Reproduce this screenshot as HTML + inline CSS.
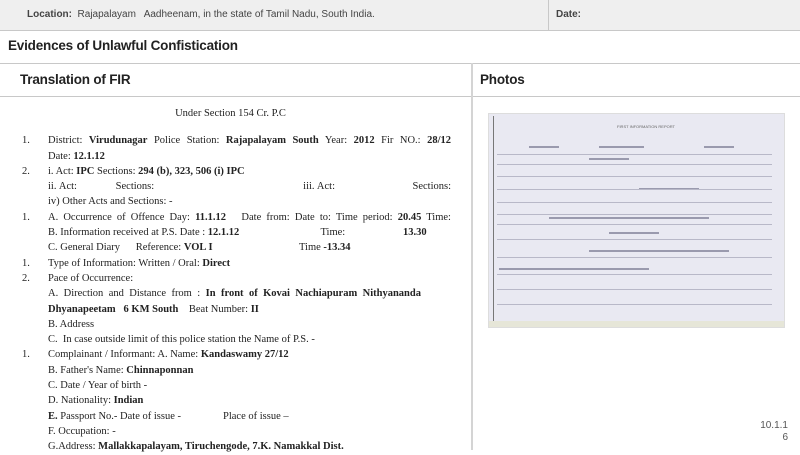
<!DOCTYPE html>
<html><head><style>
*{margin:0;padding:0;box-sizing:border-box}
body{width:800px;height:450px;overflow:hidden;background:#fff;font-family:"Liberation Sans",sans-serif;position:relative}
.top{position:absolute;left:0;top:0;width:800px;height:31px;background:#efefef;border-bottom:1px solid #c8c8c8}
.top .v{position:absolute;left:548px;top:0;width:1px;height:31px;background:#c8c8c8}
.t{position:absolute;font-size:10px;color:#444}
.h{position:absolute;font-size:13.5px;font-weight:bold;color:#222;letter-spacing:-0.2px}
.line{position:absolute;left:0;width:800px;height:1px;background:#c8c8c8}
.vl{position:absolute;left:471px;top:63px;width:2px;height:387px;background:#d4d4d4}
.doc{position:absolute;left:0;top:106px;width:471px;font-family:"Liberation Serif",serif;font-size:10.5px;color:#222;line-height:15.3px}
.r{position:relative;padding-left:48px;padding-right:20px;text-align:justify;text-align-last:justify;white-space:nowrap}
.r.n{text-align-last:left}
.r span.num{position:absolute;left:22px}
b{font-weight:bold}
.photo{position:absolute;left:488px;top:113px;width:297px;height:215px;background:#e9e9f2;border:1px solid #ddd}
.pl{position:absolute;left:8px;height:1px;background:#b8b8c8}
.sc{position:absolute;height:2px;background:#9a9aae}
</style></head><body>
<div class="top"><div class="v"></div></div>
<div class="t" style="left:27px;top:9px"><b>Location:</b>&nbsp; Rajapalayam &nbsp; Aadheenam, in the state of Tamil Nadu, South India.</div>
<div class="t" style="left:556px;top:9px"><b>Date:</b></div>
<div class="h" style="left:8px;top:38px">Evidences of Unlawful Confistication</div>
<div class="line" style="top:63px"></div>
<div class="h" style="left:20px;top:72px">Translation of FIR</div>
<div class="h" style="left:480px;top:72px">Photos</div>
<div class="line" style="top:96px"></div>
<div class="vl"></div>
<div class="doc">
<div style="text-align:center;padding-right:10px;margin-bottom:12px">Under Section 154 Cr. P.C</div>
<div class="r"><span class="num">1.</span>District: <b>Virudunagar</b> Police Station: <b>Rajapalayam South</b> Year: <b>2012</b> Fir NO.: <b>28/12</b></div>
<div class="r n">Date: <b>12.1.12</b></div>
<div class="r n"><span class="num">2.</span>i. Act: <b>IPC</b> Sections: <b>294 (b), 323, 506 (i) IPC</b></div>
<div class="r">ii. Act: &nbsp;&nbsp;&nbsp;&nbsp;&nbsp;&nbsp;&nbsp;&nbsp;&nbsp;&nbsp;&nbsp; Sections: &nbsp;&nbsp;&nbsp;&nbsp;&nbsp;&nbsp;&nbsp;&nbsp;&nbsp;&nbsp;&nbsp;&nbsp;&nbsp;&nbsp;&nbsp;&nbsp;&nbsp;&nbsp;&nbsp;&nbsp;&nbsp;&nbsp;&nbsp;&nbsp;&nbsp;&nbsp;&nbsp;&nbsp;&nbsp;&nbsp;&nbsp;&nbsp;&nbsp;&nbsp;&nbsp;&nbsp;&nbsp;&nbsp;&nbsp;&nbsp;&nbsp;&nbsp;&nbsp;&nbsp;&nbsp;&nbsp;&nbsp;&nbsp; iii. Act: &nbsp;&nbsp;&nbsp;&nbsp;&nbsp;&nbsp;&nbsp;&nbsp;&nbsp;&nbsp;&nbsp;&nbsp;&nbsp;&nbsp;&nbsp;&nbsp;&nbsp;&nbsp;&nbsp;&nbsp;&nbsp;&nbsp;&nbsp;&nbsp; Sections:</div>
<div class="r n">iv) Other Acts and Sections: -</div>
<div class="r"><span class="num">1.</span>A. Occurrence of Offence Day: <b>11.1.12</b> &nbsp; Date from: Date to: Time period: <b>20.45</b> Time:</div>
<div class="r n">B. Information received at P.S. Date : <b>12.1.12</b> &nbsp;&nbsp;&nbsp;&nbsp;&nbsp;&nbsp;&nbsp;&nbsp;&nbsp;&nbsp;&nbsp;&nbsp;&nbsp;&nbsp;&nbsp;&nbsp;&nbsp;&nbsp;&nbsp;&nbsp;&nbsp;&nbsp;&nbsp;&nbsp;&nbsp;&nbsp;&nbsp;&nbsp;&nbsp; Time: &nbsp;&nbsp;&nbsp;&nbsp;&nbsp;&nbsp;&nbsp;&nbsp;&nbsp;&nbsp;&nbsp;&nbsp;&nbsp;&nbsp;&nbsp;&nbsp;&nbsp;&nbsp;&nbsp;&nbsp; <b>13.30</b></div>
<div class="r n">C. General Diary &nbsp;&nbsp;&nbsp;&nbsp; Reference: <b>VOL I</b> &nbsp;&nbsp;&nbsp;&nbsp;&nbsp;&nbsp;&nbsp;&nbsp;&nbsp;&nbsp;&nbsp;&nbsp;&nbsp;&nbsp;&nbsp;&nbsp;&nbsp;&nbsp;&nbsp;&nbsp;&nbsp;&nbsp;&nbsp;&nbsp;&nbsp;&nbsp;&nbsp;&nbsp;&nbsp;&nbsp;&nbsp; Time <b>-13.34</b></div>
<div class="r n"><span class="num">1.</span>Type of Information: Written / Oral: <b>Direct</b></div>
<div class="r n"><span class="num">2.</span>Pace of Occurrence:</div>
<div class="r" style="padding-right:50px">A. Direction and Distance from : <b>In front of Kovai Nachiapuram Nithyananda</b></div>
<div class="r n"><b>Dhyanapeetam &nbsp; 6 KM South</b> &nbsp;&nbsp; Beat Number: <b>II</b></div>
<div class="r n">B. Address</div>
<div class="r n">C. &nbsp;In case outside limit of this police station the Name of P.S. -</div>
<div class="r n"><span class="num">1.</span>Complainant / Informant: A. Name: <b>Kandaswamy 27/12</b></div>
<div class="r n">B. Father's Name: <b>Chinnaponnan</b></div>
<div class="r n">C. Date / Year of birth -</div>
<div class="r n">D. Nationality: <b>Indian</b></div>
<div class="r n"><b>E.</b> Passport No.- Date of issue - &nbsp;&nbsp;&nbsp;&nbsp;&nbsp;&nbsp;&nbsp;&nbsp;&nbsp;&nbsp;&nbsp;&nbsp;&nbsp;&nbsp; Place of issue –</div>
<div class="r n">F. Occupation: -</div>
<div class="r n">G.Address: <b>Mallakkapalayam, Tiruchengode, 7.K. Namakkal Dist.</b></div>
</div>
<div class="photo">
<div style="position:absolute;left:4px;top:2px;width:1px;height:208px;background:#777"></div>
<div style="position:absolute;left:128px;top:10px;font-size:4px;color:#666">FIRST INFORMATION REPORT</div>
<div class="sc" style="left:40px;top:32px;width:30px"></div>
<div class="sc" style="left:110px;top:32px;width:45px"></div>
<div class="sc" style="left:215px;top:32px;width:30px"></div>
<div class="sc" style="left:100px;top:44px;width:40px"></div>
<div class="sc" style="left:150px;top:74px;width:60px"></div>
<div class="sc" style="left:60px;top:103px;width:160px"></div>
<div class="sc" style="left:120px;top:118px;width:50px"></div>
<div class="sc" style="left:100px;top:136px;width:140px"></div>
<div class="sc" style="left:10px;top:154px;width:150px"></div>
<div class="pl" style="top:40px;width:275px"></div>
<div class="pl" style="top:50px;width:275px"></div>
<div class="pl" style="top:62px;width:275px"></div>
<div class="pl" style="top:75px;width:275px"></div>
<div class="pl" style="top:88px;width:275px"></div>
<div class="pl" style="top:100px;width:275px"></div>
<div class="pl" style="top:110px;width:275px"></div>
<div class="pl" style="top:125px;width:275px"></div>
<div class="pl" style="top:143px;width:275px"></div>
<div class="pl" style="top:160px;width:275px"></div>
<div class="pl" style="top:175px;width:275px"></div>
<div class="pl" style="top:190px;width:275px"></div>
<div style="position:absolute;left:0;bottom:0;width:100%;height:6px;background:#e6e6d8"></div>
</div>
<div style="position:absolute;left:750px;top:420px;font-size:10px;color:#555;text-align:right;width:38px;line-height:12px">10.1.1<br>6</div>
</body></html>
